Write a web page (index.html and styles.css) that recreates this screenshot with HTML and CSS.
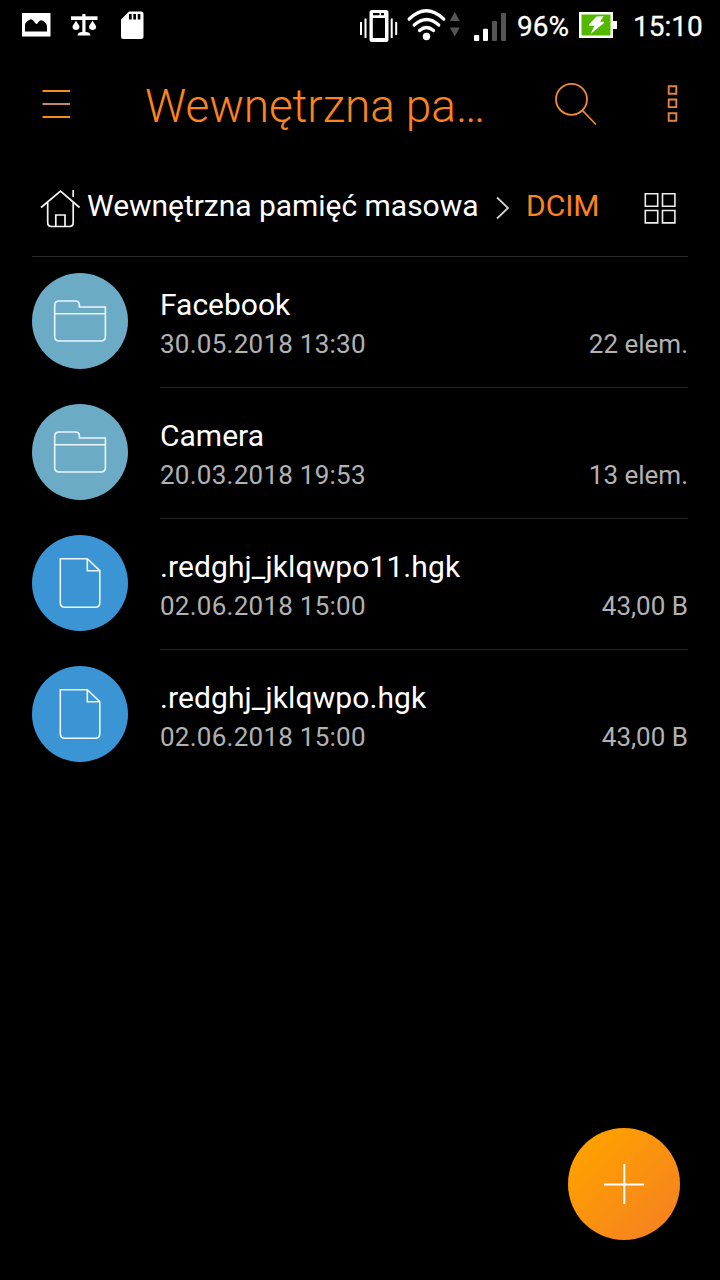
FILE: index.html
```html
<!DOCTYPE html>
<html lang="pl">
<head>
<meta charset="utf-8">
<title>DCIM</title>
<link rel="stylesheet" href="styles.css">
</head>
<body>
<div class="screen">
  <header class="status">
    <svg class="notifications" width="124" height="50" viewBox="21 0 124 50">
      <path fill="#fff" fill-rule="evenodd" d="M22 13h28.500v23.500h-28.500zM25 31.500v-6.500c0-2.500 4-5.500 6-5.700c3 .7 4 4.700 5.500 4.700c1.500 0 2.500-4.200 5-3.700c3 .7 5.500 4 5.500 6v5.200z"/>
      <path fill="#fff" d="M71 16.300h26.500v3.700H71z"/>
      <path fill="#fff" d="M82.300 14h3.200v18c3.500.2 5 1.500 5 3.600H77.500c0-2.100 1.500-3.400 4.800-3.600zM76 20.500c1 2.500 3.500 4.500 3.500 6.500c0 4-7 4-7 0c0-2 2.500-4 3.500-6.500zM92.500 20.500c1 2.500 3.700 4.500 3.700 6.500c0 4-7.200 4-7.200 0c0-2 2.500-4 3.500-6.500z"/>
      <path fill="#fff" fill-rule="evenodd" d="M129 11.500h12q2.500 0 2.500 2.500v22.500q0 2.500-2.500 2.500h-17.500q-2.500 0-2.500-2.500v-17zM129 14v5.500h2.700v-5.500zM133.300 14v5.500h2.700v-5.500zM137.700 14v5.500h2.700v-5.500z"/>
    </svg>
    <svg class="signals" width="150" height="50" viewBox="358 0 150 50">
      <path stroke="#fff" stroke-width="2" d="M361 22v13M365.500 18.500v19.500M391.700 18.500v19.500M396.200 22v13"/>
      <path fill="#fff" fill-rule="evenodd" d="M372 10h14q2.500 0 2.500 2.500v27q0 2.500-2.500 2.500h-14q-2.500 0-2.500-2.500v-27q0-2.500 2.500-2.500zM372.800 18v20h12.200v-20zM373 13v2.200h6.500v-2.200zM381 13v2.200h3v-2.200z"/>
      <g fill="none" stroke="#fff" stroke-width="3.400" stroke-linecap="round"><path d="M409.200 19q17-16.500 34.500 0M414.200 25q12.500-11 24.500 0M419.500 30.500q7-6 14 0"/></g>
      <circle cx="426.500" cy="36.500" r="3.700" fill="#fff"/>
      <path fill="#555" d="M454.800 12l5 9h-10zM449.800 27.500h10l-5 9z"/>
      <rect x="474" y="35" width="5.200" height="6" rx="1" fill="#fff"/><rect x="483" y="28.700" width="5" height="12.300" rx="1" fill="#fff"/>
      <rect x="492" y="21" width="5" height="20" rx="1" fill="#555"/><rect x="501" y="13" width="5" height="28" rx="1" fill="#555"/>
    </svg>
    <span class="percent">96%</span>
    <svg class="battery" width="40" height="50" viewBox="578 0 40 50">
      <path fill="#fff" d="M579 12h34v9h4v8h-4v9h-34z"/><path fill="#55b800" d="M581.500 14.500h29v21h-29z"/>
      <path fill="#fff" d="M596.500 16.500l7-.3l-3.500 5.500h3.800l.2 1.300l-13.500 11l4-8.300h-5.300v-1.500z"/>
    </svg>
    <span class="clock">15:10</span>
  </header>

  <nav class="toolbar">
    <svg class="menu-icon" width="30" height="40" viewBox="41 84 30 40"><path fill="none" stroke="#f58a22" stroke-width="1.800" d="M42.500 91h27.500M42.500 117h27.500"/><path stroke="#dc9875" stroke-width="1.800" d="M42.500 104h27.500"/></svg>
    <h1 class="title">Wewnętrzna pa…</h1>
    <svg class="search-icon" width="46" height="46" viewBox="553 81 46 46"><g fill="none" stroke="#f08b34" stroke-width="1.800"><circle cx="571.500" cy="99.300" r="15.500"/><path d="M582.500 110.500l13.500 14"/></g></svg>
    <svg class="more-icon" width="12" height="40" viewBox="666 84 12 40"><path fill="none" stroke="#e28443" stroke-width="1.900" d="M668.700 86.200h7.600v7.600h-7.600zM668.700 99.500h7.600v7.600h-7.600zM668.700 113.200h7.600v7.600h-7.600z"/></svg>
  </nav>

  <div class="path">
    <svg class="home-icon" width="42" height="42" viewBox="40 187 42 42"><g fill="none" stroke="#f4f4f4" stroke-width="1.700"><path d="M41 207.500l19.500-16.500l19 16.500M73.200 190v7M47.700 202.500v20q0 4 4 4h17.500q4 0 4-4v-20M55.800 226v-11h9.200v11"/></g></svg>
    <span class="crumb">Wewnętrzna pamięć masowa</span>
    <svg class="chevron" width="14" height="24" viewBox="496 196 14 24"><path fill="none" stroke="#d0d0d0" stroke-width="1.800" d="M497 197.500l11 10.500l-11 10.500"/></svg>
    <span class="crumb current">DCIM</span>
    <svg class="grid-icon" width="32" height="32" viewBox="644 192 32 32"><path fill="none" stroke="#eee" stroke-width="1.600" d="M645.300 193.800h12.400v12.400h-12.400zM662.500 193.800h12.400v12.400h-12.400zM645.300 210.500h12.400v12.400h-12.400zM662.500 210.500h12.400v12.400h-12.400z"/></svg>
  </div>

  <ul class="files">
    <li class="row">
      <span class="avatar folder"><svg width="56" height="46" viewBox="52 298 56 46"><path fill="none" stroke="#eaf6fb" stroke-width="1.600" d="M54.700 313.800h50.700M54.700 306v30.500q0 4.500 4.500 4.500h41.700q4.500 0 4.500-4.500v-29.500h-26v-2q0-4-4-4h-16.200q-4.500 0-4.500 4.500z"/></svg></span>
      <div class="info"><div class="name">Facebook</div><div class="meta"><span class="date">30.05.2018 13:30</span><span>22 elem.</span></div></div>
    </li>
    <li class="row">
      <span class="avatar folder"><svg width="56" height="46" viewBox="52 298 56 46"><path fill="none" stroke="#eaf6fb" stroke-width="1.600" d="M54.700 313.800h50.700M54.700 306v30.500q0 4.500 4.500 4.500h41.700q4.500 0 4.500-4.500v-29.500h-26v-2q0-4-4-4h-16.200q-4.500 0-4.500 4.500z"/></svg></span>
      <div class="info"><div class="name">Camera</div><div class="meta"><span class="date">20.03.2018 19:53</span><span>13 elem.</span></div></div>
    </li>
    <li class="row">
      <span class="avatar file"><svg width="44" height="52" viewBox="58 557 44 52"><path fill="none" stroke="#edf6ff" stroke-width="1.600" d="M60.300 558.700h27l12.500 12v32q0 4.500-4.500 4.500h-30.500q-4.500 0-4.500-4.500zM87.300 558.700v12h12.500"/></svg></span>
      <div class="info"><div class="name long">.redghj_jklqwpo11.hgk</div><div class="meta"><span class="date">02.06.2018 15:00</span><span>43,00 B</span></div></div>
    </li>
    <li class="row">
      <span class="avatar file"><svg width="44" height="52" viewBox="58 557 44 52"><path fill="none" stroke="#edf6ff" stroke-width="1.600" d="M60.300 558.700h27l12.500 12v32q0 4.500-4.500 4.500h-30.500q-4.500 0-4.500-4.500zM87.300 558.700v12h12.500"/></svg></span>
      <div class="info"><div class="name long">.redghj_jklqwpo.hgk</div><div class="meta"><span class="date">02.06.2018 15:00</span><span>43,00 B</span></div></div>
    </li>
  </ul>

  <button class="add" aria-label="Dodaj"><svg width="42" height="42" viewBox="0 0 42 42"><path stroke="#fff" stroke-width="2" d="M1 21.500h40M21.300 1v40"/></svg></button>
</div>
</body>
</html>
```

FILE: styles.css
```css
* { box-sizing: border-box; }
body { margin: 0; background: #000; color: #fff; font-family: Roboto, sans-serif; }
svg { display: block; flex: none; }
.screen { display: flex; flex-direction: column; width: 720px; height: 1280px; background: #000; }

.status { display: flex; align-items: center; height: 50px; padding-left: 21px; font-size: 28px; line-height: 50px; white-space: nowrap; -webkit-text-stroke: 0.3px #fff; }
.signals { margin-left: 213px; }
.percent { width: 61px; margin-left: 9px; padding-top: 4px; }
.clock { margin-left: 15px; padding-top: 4px; }

.toolbar { display: flex; align-items: flex-start; height: 108px; padding: 31px 0 0 41px; }
.menu-icon, .more-icon { margin-top: 3px; }
.title { width: 408px; margin: -2px 0 0 74px; color: #fc831d; font-size: 46px; font-weight: 300; line-height: 54px; letter-spacing: -0.1px; white-space: nowrap; }
.more-icon { margin-left: 67px; }

.path { display: flex; align-items: center; height: 99px; margin: 0 32px; padding: 2px 0 0 8px; border-bottom: 1px solid #292929; }
.crumb { width: 391px; margin: -4px 0 0 5px; font-size: 30px; line-height: 40px; letter-spacing: -0.03px; white-space: nowrap; }
.chevron { margin-left: 18px; }
.current { width: 74px; margin-left: 16px; color: #fc831d; }
.grid-icon { margin-left: 44px; }

.files { flex: 1; margin: 0; padding: 0 32px; list-style: none; }
.row { display: flex; gap: 32px; height: 131px; }
.avatar { display: flex; align-items: center; justify-content: center; flex: none; width: 96px; height: 96px; margin-top: 16px; border-radius: 50%; }
.folder { background: #6cabc6; }
.file { background: #3b95d4; }
.info { flex: 1; padding-top: 28px; border-bottom: 1px solid #262626; }
.row:last-child .info { border-bottom: 0; }
.name { font-size: 30px; line-height: 40px; }
.long { letter-spacing: 0.1px; }
.meta { display: flex; justify-content: space-between; color: #b2b2b2; font-size: 26px; line-height: 38px; }
.date { letter-spacing: 0.25px; }

.add { display: flex; align-items: center; justify-content: center; align-self: flex-end; width: 112px; height: 112px; margin: 0 40px 40px 0; padding: 0; border: 0; border-radius: 50%; background: linear-gradient(135deg, #ffa000 15%, #f58220 90%); }
```
